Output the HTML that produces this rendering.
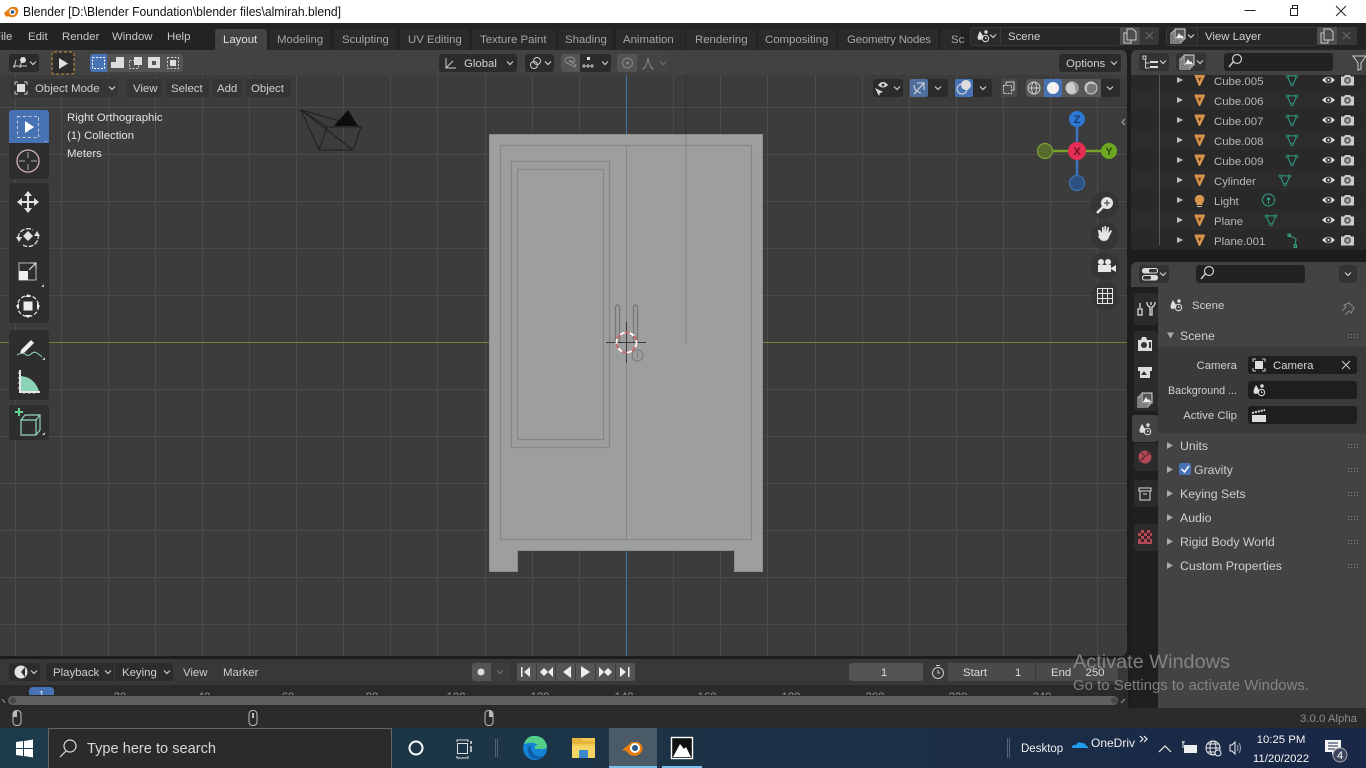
<!DOCTYPE html>
<html><head><meta charset="utf-8"><style>
html,body{margin:0;padding:0;background:#1d1d1d;width:1366px;height:768px;overflow:hidden}
svg{display:block}
text{font-family:"Liberation Sans","DejaVu Sans",sans-serif;font-size:11.4px;fill:#c4c4c4}
.t{fill:#a6a6a6}
.w{fill:#e6e6e6}
.ic{fill:none;stroke:#d0d0d0;stroke-width:1.2}
.f{fill:#d0d0d0}
</style></head><body>
<svg width="1366" height="768" viewBox="0 0 1366 768" xmlns="http://www.w3.org/2000/svg">
<defs>
<linearGradient id="tb" x1="0" x2="1" y1="0" y2="0"><stop offset="0" stop-color="#1c3b4b"/><stop offset=".5" stop-color="#1c3346"/><stop offset="1" stop-color="#1a2747"/></linearGradient>
<g id="tri"><path d="M-4-4.500H4.500L0 5z" fill="#c9843d" stroke="#d9954e" stroke-width="2" stroke-linejoin="round"/><path d="M-1.500-2H1.500L0 1.500z" fill="#5b3a1a"/></g>
<g id="eye"><path d="M-6.500 0Q0-6.500 6.500 0Q0 6.500-6.500 0z" fill="#ddd"/><circle r="2.800" fill="#333"/><circle r="1.100" fill="#ddd"/></g>
<g id="cam"><path d="M-6.500-3.500h3l1-1.500h5l1 1.500h3v9h-13z" fill="#ccc"/><circle cy=".4" r="3.400" fill="#555"/><circle cy=".4" r="1.800" fill="#aaa"/></g>
<g id="mesh"><g transform="scale(.82)"><path d="M-6-5H6L1 6H-1z" fill="none" stroke="#2fa588" stroke-width="1.200"/><rect x="-7" y="-6" width="2.500" height="2.500" fill="#223" stroke="#2fa588" stroke-width=".9"/><rect x="4.500" y="-6" width="2.500" height="2.500" fill="#223" stroke="#2fa588" stroke-width=".9"/><rect x="-1.200" y="4.500" width="2.500" height="2.500" fill="#223" stroke="#2fa588" stroke-width=".9"/></g></g>
<g id="grip" fill="#8a8a8a"><rect x="0" y="0" width="1" height="1"/><rect x="3" y="0" width="1" height="1"/><rect x="6" y="0" width="1" height="1"/><rect x="9" y="0" width="1" height="1"/><rect x="0" y="3" width="1" height="1"/><rect x="3" y="3" width="1" height="1"/><rect x="6" y="3" width="1" height="1"/><rect x="9" y="3" width="1" height="1"/></g>
<g id="chev"><path d="M-3-1.500L0 1.500L3-1.500" fill="none" stroke="#ccc" stroke-width="1.200"/></g>
<g id="sceneic"><path d="M-5 3.500Q-6.500 1-3-5Q-.5-1 .5 1Q-1 5-5 3.500z" fill="#ddd"/><circle cx="3" cy="-4" r="1.700" fill="#ddd"/><circle cx="2.500" cy="2.500" r="3.200" fill="none" stroke="#ddd"/><path d="M2.500 1v1.500h1.500" stroke="#ddd" fill="none" stroke-width=".8"/></g>
<g id="vl"><rect x="-7" y="-3" width="10" height="10" fill="none" stroke="#ccc"/><rect x="-5" y="-5" width="10" height="10" fill="#333" stroke="#ccc"/><rect x="-3" y="-7" width="10" height="10" fill="#555" stroke="#ddd"/><path d="M-2 2L1-3L3 0L4-1L6 2z" fill="#eee"/></g>
<g id="copy"><path d="M-6-3h3v-4h6l3 3v8h-5v3h-7z" fill="none" stroke="#ccc" stroke-width="1"/><path d="M-3-3v7h4" fill="none" stroke="#ccc"/></g>
<g id="props"><rect x="-8" y="-6" width="16" height="5.500" rx="2.500" fill="#ddd"/><rect x="-8" y="1" width="16" height="5.500" rx="2.500" fill="#ddd"/><rect x="-1" y="-5" width="8" height="3.500" rx="1.700" fill="#333"/><rect x="-7" y="2" width="8" height="3.500" rx="1.700" fill="#333"/></g>
<g id="mag"><circle cx="2" cy="-2" r="4.500" fill="none" stroke="#ccc" stroke-width="1.200"/><path d="M-1-.0L-6 6" stroke="#ccc" stroke-width="1.500"/></g>
<g id="mouse"><rect x="-4" y="-7.500" width="8" height="15" rx="3.500" fill="none" stroke="#bbb"/></g>
</defs>

<!-- base -->
<rect width="1366" height="768" fill="#1d1d1d"/>

<!-- title bar -->
<rect width="1366" height="23" fill="#fff"/>
<g transform="translate(11,12)"><path d="M-7 1L0-5H5Q9-2 6 3Q2 7-3 4L-5 5z" fill="#e87d0d"/><circle cx="1.500" cy="0" r="3.200" fill="#fff"/><circle cx="1.500" cy="0" r="1.800" fill="#265787"/></g>
<text x="23" y="16" style="fill:#111;font-size:12.500px" textLength="318" lengthAdjust="spacingAndGlyphs">Blender [D:\Blender Foundation\blender files\almirah.blend]</text>
<path d="M1244.500 10.500h11" stroke="#222"/>
<path d="M1290.500 8.500h7v-3h-5v3M1290.500 8.500v7h7v-7" fill="none" stroke="#222"/>
<path d="M1336 6l10 10M1346 6l-10 10" stroke="#222"/>

<!-- topbar -->
<rect y="23" width="1366" height="28" fill="#232323"/>
<text x="-6" y="40" style="fill:#c8c8c8">File</text>
<text x="28" y="40" style="fill:#c8c8c8">Edit</text>
<text x="62" y="40" style="fill:#c8c8c8">Render</text>
<text x="112" y="40" style="fill:#c8c8c8">Window</text>
<text x="167" y="40" style="fill:#c8c8c8">Help</text>

<rect x="270" y="29" width="60" height="22" rx="3" fill="#2a2a2a"/>
<rect x="334" y="29" width="62" height="22" rx="3" fill="#2a2a2a"/>
<rect x="400" y="29" width="69" height="22" rx="3" fill="#2a2a2a"/>
<rect x="472" y="29" width="84" height="22" rx="3" fill="#2a2a2a"/>
<rect x="558" y="29" width="54" height="22" rx="3" fill="#2a2a2a"/>
<rect x="616" y="29" width="69" height="22" rx="3" fill="#2a2a2a"/>
<rect x="686" y="29" width="70" height="22" rx="3" fill="#2a2a2a"/>
<rect x="758" y="29" width="78" height="22" rx="3" fill="#2a2a2a"/>
<rect x="838" y="29" width="100" height="22" rx="3" fill="#2a2a2a"/>
<rect x="941" y="29" width="20" height="22" rx="3" fill="#2a2a2a"/>
<rect x="215" y="29" width="52" height="22" rx="3" fill="#434343"/>
<text x="223" y="43" style="fill:#e0e0e0">Layout</text>
<text x="277" y="43" class="t">Modeling</text>
<text x="342" y="43" class="t">Sculpting</text>
<text x="408" y="43" class="t">UV Editing</text>
<text x="480" y="43" class="t">Texture Paint</text>
<text x="565" y="43" class="t">Shading</text>
<text x="623" y="43" class="t">Animation</text>
<text x="695" y="43" class="t">Rendering</text>
<text x="765" y="43" class="t">Compositing</text>
<text x="847" y="43" class="t" textLength="84">Geometry Nodes</text>
<text x="951" y="43" class="t">Sc</text>

<!-- scene selector -->
<rect x="970.500" y="27.500" width="150" height="18" rx="3" fill="#2a2a2a" stroke="#383838"/>
<rect x="1000" y="28" width="120" height="17" fill="#282828"/>
<path d="M1000.500 28v17" stroke="#3a3a3a"/>
<rect x="1120" y="27" width="20" height="18" fill="#4d4d4d"/>
<rect x="1140" y="27" width="19" height="18" rx="2" fill="#383838"/>
<use href="#sceneic" transform="translate(983,36)"/><use href="#chev" transform="translate(993,36)"/>
<text x="1008" y="40" style="fill:#d0d0d0">Scene</text>
<use href="#copy" transform="translate(1130,36)"/>
<path d="M1146 32l7 7M1153 32l-7 7" stroke="#6a6a6a"/>
<rect x="1166.500" y="27.500" width="151" height="18" rx="3" fill="#2a2a2a" stroke="#383838"/>
<rect x="1197" y="28" width="120" height="17" fill="#282828"/>
<path d="M1197.500 28v17" stroke="#3a3a3a"/>
<rect x="1317" y="27" width="20" height="18" fill="#4d4d4d"/>
<rect x="1337" y="27" width="20" height="18" rx="2" fill="#383838"/>
<use href="#vl" transform="translate(1178,36)"/><use href="#chev" transform="translate(1191,36)"/>
<text x="1205" y="40" style="fill:#d0d0d0">View Layer</text>
<use href="#copy" transform="translate(1327,36)"/>
<path d="M1343 32l7 7M1350 32l-7 7" stroke="#6a6a6a"/>

<!-- viewport -->
<path d="M0 50H1121a6 6 0 0 1 6 6V650a6 6 0 0 1-6 6H0z" fill="#3c3c3c"/>
<g stroke="#4b4b4b" stroke-width="1">
<path d="M15.500 75V656M61.500 75V656M108.500 75V656M155.500 75V656M202.500 75V656M249.500 75V656M296.500 75V656M343.500 75V656M390.500 75V656M437.500 75V656M485.500 75V656M532.500 75V656M579.500 75V656M673.500 75V656M720.500 75V656M767.500 75V656M815.500 75V656M862.500 75V656M909.500 75V656M956.500 75V656M1003.500 75V656M1050.500 75V656M1097.500 75V656"/>
<path d="M0 107.500H1127M0 154.500H1127M0 201.500H1127M0 248.500H1127M0 295.500H1127M0 389.500H1127M0 436.500H1127M0 483.500H1127M0 530.500H1127M0 577.500H1127M0 624.500H1127"/>
</g>
<path d="M0 342.500H1127" stroke="#6b8a32" stroke-width="1"/>
<path d="M626.500 75V656" stroke="#3f72a8" stroke-width="1"/>

<!-- header of viewport -->
<path d="M0 50H1121a6 6 0 0 1 6 6V75H0z" fill="#424242"/>

<!-- almirah -->
<path d="M489.500 134.500H762.500V571.500H734.500V550.500H517.500V571.500H489.500z" fill="#9d9f9f" stroke="#8c8e8e"/>
<g fill="none" stroke="#858787" stroke-width="1">
<rect x="500.500" y="145.500" width="251" height="394" stroke-width="1.200"/>
<rect x="511.500" y="161.500" width="98" height="286" stroke-width="1.200"/>
<rect x="517.500" y="169.500" width="86" height="270" stroke-width="1.200"/>
<path d="M626.500 145V540"/>
<path d="M615.500 342V308q0-3 2-3t2 3V342M633.500 342V308q0-3 2-3t2 3V342" stroke="#747676" stroke-width="1.200"/>
</g>
<path d="M686 75V134" stroke="#2e2e2e" stroke-width=".8"/>
<path d="M686 134V344" stroke="#7a7c7c" stroke-width=".8"/>
<path d="M606 342.500H646M626.500 322V363" stroke="#3c3c3c" stroke-width="1"/>
<circle cx="626.500" cy="342.500" r="10" fill="none" stroke="#c66" stroke-width="1.800"/>
<circle cx="626.500" cy="342.500" r="10" fill="none" stroke="#fff" stroke-width="1.800" stroke-dasharray="5 5"/>
<circle cx="637.500" cy="355.500" r="5.500" fill="none" stroke="#7d7f7f" stroke-width="1.200"/>
<path d="M637.500 352v6" stroke="#7d7f7f"/>

<!-- camera wire -->
<g fill="none" stroke="#1e1e1e" stroke-width="1">
<path d="M301 110L361 127L353 150H319z"/>
<path d="M301 110L327 127H361M327 127L319 150M301 110L353 150"/>
</g>
<path d="M334 126L348 110L358 126z" fill="#0d0d0d"/>

<!-- viewport text -->
<text x="67" y="121" style="fill:#e4e4e4">Right Orthographic</text>
<text x="67" y="139" style="fill:#e4e4e4">(1) Collection</text>
<text x="67" y="157" style="fill:#e4e4e4">Meters</text>

<!-- header row 1 -->
<rect x="9" y="54" width="30" height="18" rx="3" fill="#2b2b2b"/>
<g stroke="#ccc" fill="none"><path d="M13 66h14M16 60l-2 8M22 60l-2 8"/></g><circle cx="23" cy="60" r="3" fill="#ddd"/><use href="#chev" transform="translate(33,63)"/>
<rect x="52" y="52" width="22" height="22" rx="2" fill="#2d2d2d" stroke="#c8963c" stroke-dasharray="3 2"/>
<path d="M59 58V69L68 63.500z" fill="#e0e0e0"/>
<rect x="90" y="54" width="93" height="18" rx="3" fill="#545454"/>
<path d="M93 54h14v18h-14a3 3 0 0 1-3-3v-12a3 3 0 0 1 3-3z" fill="#4772b3"/>
<rect x="92.500" y="57.500" width="12" height="11" fill="none" stroke="#fff" stroke-dasharray="2 1.500"/>
<path d="M111 68V62h5v-5h8v11z" fill="#ddd"/>
<rect x="129.500" y="60.500" width="9" height="8" fill="none" stroke="#ccc" stroke-dasharray="2 1.500"/><rect x="134" y="57" width="8" height="8" fill="#ddd"/>
<path d="M148 57h12v11h-12zM152 61v4h4v-4z" fill="#ddd" fill-rule="evenodd"/>
<rect x="167.500" y="57.500" width="11" height="11" fill="none" stroke="#ccc" stroke-dasharray="2 1.500"/><rect x="170" y="60" width="6" height="6" fill="#ddd"/>

<rect x="439" y="54" width="78" height="18" rx="3" fill="#2b2b2b"/>
<path d="M446 58v10h10M446 68l7-7" fill="none" stroke="#ccc"/>
<text x="464" y="67" style="fill:#d0d0d0">Global</text><use href="#chev" transform="translate(510,63)"/>
<rect x="525" y="54" width="29" height="18" rx="3" fill="#2b2b2b"/>
<circle cx="534" cy="65" r="3.500" fill="none" stroke="#ccc"/><circle cx="537" cy="61" r="3.500" fill="none" stroke="#ccc"/><use href="#chev" transform="translate(548,63)"/>
<rect x="561" y="54" width="50" height="18" rx="3" fill="#2b2b2b"/>
<path d="M564 54h16v18h-16a3 3 0 0 1-3-3v-12a3 3 0 0 1 3-3z" fill="#545454"/>
<path d="M575 67L565 62Q565 57 570 57Q574 57 575 61L572 62Q570 60 569 61L576 65z" fill="none" stroke="#8f8f8f"/>
<path d="M582 66h12M584 64v4M588 64v4M592 64v4" stroke="#ccc" fill="none"/><rect x="587" y="57" width="3" height="3" fill="#ddd"/><use href="#chev" transform="translate(605,63)"/>
<rect x="617" y="54" width="51" height="18" rx="3" fill="#444"/>
<path d="M620 54h17v18h-17a3 3 0 0 1-3-3v-12a3 3 0 0 1 3-3z" fill="#545454"/>
<circle cx="627.500" cy="63" r="5" fill="none" stroke="#888"/><circle cx="627.500" cy="63" r="1.500" fill="#888"/>
<path d="M642 69Q646 69 648 58Q650 69 654 69" fill="none" stroke="#8a8a8a"/><use href="#chev" transform="translate(663,63)" opacity=".3"/>
<rect x="1059" y="54" width="62" height="18" rx="3" fill="#2b2b2b"/>
<text x="1066" y="67" style="fill:#d0d0d0">Options</text><use href="#chev" transform="translate(1114,63)"/>

<!-- header row 2 -->
<rect x="10" y="79" width="108" height="18" rx="3" fill="#353535"/>
<rect x="17" y="84" width="8" height="8" fill="#ddd"/><path d="M15 85v-3h3M24 82h3v3M27 91v3h-3M18 94h-3v-3" fill="none" stroke="#ccc"/>
<text x="35" y="92" style="fill:#cfcfcf">Object Mode</text><use href="#chev" transform="translate(112,88)"/>
<rect x="126" y="79" width="36" height="18" rx="3" fill="#353535"/>
<rect x="166" y="79" width="43" height="18" rx="3" fill="#353535"/>
<rect x="212" y="79" width="30" height="18" rx="3" fill="#353535"/>
<rect x="246" y="79" width="45" height="18" rx="3" fill="#353535"/>
<text x="133" y="92" style="fill:#cfcfcf">View</text>
<text x="171" y="92" style="fill:#cfcfcf">Select</text>
<text x="217" y="92" style="fill:#cfcfcf">Add</text>
<text x="251" y="92" style="fill:#cfcfcf">Object</text>

<!-- right header icons -->
<rect x="873" y="79" width="30" height="18" rx="3" fill="#2b2b2b"/>
<path d="M875 88l4 8 1-3 3-1z" fill="#ddd"/><path d="M878 85Q883 79 888 85Q883 90 878 85z" fill="#ddd"/><circle cx="883" cy="85" r="1.500" fill="#333"/><use href="#chev" transform="translate(897,88)"/>
<rect x="910" y="79" width="38" height="18" rx="3" fill="#2b2b2b"/>
<rect x="910" y="79" width="18" height="18" rx="2" fill="#4f6f9f"/>
<path d="M914 94L924 83M917 83h7v7M914 85Q914 91 921 93" fill="none" stroke="#ddd"/><use href="#chev" transform="translate(938,88)"/>
<rect x="955" y="79" width="37" height="18" rx="3" fill="#2b2b2b"/>
<rect x="955" y="79" width="18" height="18" rx="2" fill="#4772b3"/>
<circle cx="962" cy="89" r="5" fill="none" stroke="#ddd"/><circle cx="966" cy="85" r="5" fill="#ddd"/><use href="#chev" transform="translate(983,88)"/>
<rect x="1001" y="79" width="16" height="18" rx="2" fill="#4a4a4a"/>
<rect x="1003.500" y="85.500" width="8" height="8" fill="none" stroke="#ccc" stroke-dasharray="2 1"/><path d="M1006 85v-3h8v8h-3" fill="none" stroke="#ccc"/>
<rect x="1026" y="79" width="94" height="18" rx="3" fill="#2b2b2b"/>
<path d="M1029 79h72v18h-72a3 3 0 0 1-3-3v-12a3 3 0 0 1 3-3z" fill="#575757"/>
<rect x="1044" y="79" width="18" height="18" fill="#4772b3"/>
<circle cx="1034" cy="88" r="6" fill="none" stroke="#ccc"/><ellipse cx="1034" cy="88" rx="2.500" ry="6" fill="none" stroke="#ccc"/><path d="M1028 88h12" stroke="#ccc"/>
<circle cx="1053" cy="88" r="6" fill="#f3f3f3"/>
<circle cx="1072" cy="88" r="6" fill="#888" stroke="#bbb"/><path d="M1072 82a6 6 0 0 0 0 12l4-2-1-7z" fill="#ccc"/>
<circle cx="1091" cy="88" r="6" fill="#777" stroke="#ccc"/><path d="M1087 91a5 5 0 0 1 7-7" fill="none" stroke="#ddd"/>
<use href="#chev" transform="translate(1110,88)"/>
<path d="M1125 119l-3 3 3 3" fill="none" stroke="#aaa"/>

<!-- gizmo -->
<path d="M1077 119V183" stroke="#3a74c0" stroke-width="2.500"/>
<path d="M1045 151H1109" stroke="#7ba22a" stroke-width="2.500"/>
<circle cx="1077" cy="119" r="8" fill="#2e78d2"/><text x="1077" y="123" text-anchor="middle" style="fill:#123a70;font-weight:bold;font-size:11px">Z</text>
<circle cx="1077" cy="183" r="7.500" fill="#2d527f" stroke="#3b70b3" stroke-width="1.200"/>
<circle cx="1045" cy="151" r="7.500" fill="#566b2d" stroke="#7fa034" stroke-width="1.200"/>
<circle cx="1077" cy="151" r="9" fill="#e62e54"/><text x="1077" y="155" text-anchor="middle" style="fill:#6d0f24;font-weight:bold;font-size:11px">X</text>
<circle cx="1109" cy="151" r="8" fill="#6ea820"/><text x="1109" y="155" text-anchor="middle" style="fill:#2e4a10;font-weight:bold;font-size:11px">Y</text>

<!-- nav icons -->
<circle cx="1105" cy="205" r="14" fill="#333" fill-opacity=".8"/>
<circle cx="1107" cy="203" r="6" fill="#e5e5e5"/><path d="M1103 207l-6 6" stroke="#e5e5e5" stroke-width="2.500"/><path d="M1104 203h6M1107 200v6" stroke="#333"/>
<circle cx="1105" cy="236" r="14" fill="#333" fill-opacity=".8"/>
<path d="M1099 236l-1-6 2 0 2 3 0-6h1.500l.5 5 .5-6h1.500l.5 6 1-5h1.500l-.5 6 2-3 1.500 1-3 6q-1 4-5 4q-4 0-6-5z" fill="#e5e5e5"/>
<circle cx="1105" cy="266" r="14" fill="#333" fill-opacity=".8"/>
<circle cx="1101" cy="262" r="3" fill="#e5e5e5"/><circle cx="1108" cy="262" r="3" fill="#e5e5e5"/><rect x="1098" y="265" width="13" height="7" fill="#e5e5e5"/><path d="M1111 268l5-3v7l-5-3z" fill="#e5e5e5"/>
<circle cx="1105" cy="296" r="14" fill="#333" fill-opacity=".8"/>
<path d="M1097.500 288.500h15v15h-15zM1102.500 288.500v15M1107.500 288.500v15M1097.500 293.500h15M1097.500 298.500h15" fill="none" stroke="#e5e5e5"/>

<!-- toolbar -->
<rect x="9" y="110" width="40" height="69" rx="3" fill="#2e2e2e"/>
<path d="M12 110h34a3 3 0 0 1 3 3v30h-40v-30a3 3 0 0 1 3-3z" fill="#4772b3"/>
<rect x="17.500" y="116.500" width="21" height="21" fill="none" stroke="#c9c9c9" stroke-dasharray="3 2.500"/>
<path d="M25 121V133L34 127z" fill="#fff"/><path d="M47 141l-3 1h3z" fill="#ccc"/>
<circle cx="28" cy="161" r="11" fill="none" stroke="#d6b4b4" stroke-width="1.300"/>
<path d="M28 152v6M28 164v6M19 161h6M31 161h6" stroke="#aaa"/>
<rect x="9" y="183" width="40" height="140" rx="3" fill="#2e2e2e"/>
<g fill="#e2e2e2"><path d="M28 191l-4 5h8zM28 213l-4-5h8zM17 202l5-4v8zM39 202l-5-4v8z"/><rect x="27" y="195" width="2" height="14"/><rect x="21" y="201" width="14" height="2"/></g>
<path d="M28 232l5 5-5 5-5-5z" fill="#e2e2e2" transform="translate(0,-1)"/>
<path d="M18 238a10 10 0 0 1 15-8M38 234a10 10 0 0 1-15 11" fill="none" stroke="#e2e2e2" stroke-width="1.300" stroke-dasharray="5 1.500"/>
<path d="M16 237l6 0-3 5zM40 236l-6 0 3-5z" fill="#e2e2e2"/>
<rect x="19" y="263" width="17" height="17" fill="none" stroke="#bbb"/><rect x="19" y="271" width="9" height="9" fill="#eee"/><path d="M29 270l7-7M31 263h5v5" stroke="#eee" fill="none"/>
<path d="M44 287v-3l-3 3z" fill="#bbb"/>
<circle cx="28" cy="306" r="10.500" fill="none" stroke="#e2e2e2" stroke-width="1.300" stroke-dasharray="4 2"/><rect x="23.500" y="301.500" width="9" height="9" fill="#eee"/>
<path d="M28 294l3 3h-6zM28 318l3-3h-6zM16 306l3-3v6zM40 306l-3-3v6z" fill="#eee"/>
<rect x="9" y="330" width="40" height="70" rx="3" fill="#2e2e2e"/>
<path d="M31 340l3 3-10 10-4 1 1-4z" fill="#eee"/><path d="M17 355q5-3 8-1q3 3 6 0q3-3 6-1q3 2 5 4" fill="none" stroke="#8ed3ba"/>
<path d="M45 360v-3l-3 3z" fill="#bbb"/>
<path d="M20 370V392H40" fill="none" stroke="#e6e6e6" stroke-width="2"/><path d="M21 376q13 1 18 15H21z" fill="#8bd4b6"/>
<path d="M20 373h-2M20 378h-2M20 383h-2M20 388h-2M24 392v2M29 392v2M34 392v2" stroke="#e6e6e6"/>
<rect x="9" y="405" width="40" height="35" rx="3" fill="#2e2e2e"/>
<path d="M21 420h15v15h-15zM21 420l4-5h15l-4 5M40 415v15l-4 5" fill="none" stroke="#93d8bb" stroke-width="1.200"/>
<path d="M19 408v8M15 412h8" stroke="#68d08f" stroke-width="2"/>
<path d="M45 435v-3l-3 3z" fill="#bbb"/>

<!-- timeline -->
<rect x="0" y="656" width="1128" height="3" fill="#1d1d1d"/>
<path d="M0 659H1122a6 6 0 0 1 6 6V708H0z" fill="#2a2a2a"/>
<path d="M0 659H1122a6 6 0 0 1 6 6V685H0z" fill="#383838"/>
<rect x="9" y="663" width="31" height="18" rx="3" fill="#2c2c2c"/>
<circle cx="21" cy="672" r="6.500" fill="#e2e2e2"/><path d="M25 667l-4 5 4 5z" fill="#2c2c2c"/><use href="#chev" transform="translate(34,672)"/>
<rect x="46" y="663" width="127" height="18" rx="3" fill="#2c2c2c"/>
<path d="M114.500 663v18" stroke="#3c3c3c"/>
<text x="53" y="676" style="fill:#cfcfcf">Playback</text><use href="#chev" transform="translate(108,672)"/>
<text x="122" y="676" style="fill:#cfcfcf">Keying</text><use href="#chev" transform="translate(167,672)"/>
<text x="183" y="676" style="fill:#cfcfcf">View</text>
<text x="223" y="676" style="fill:#cfcfcf">Marker</text>
<rect x="472" y="663" width="38" height="18" rx="3" fill="#3d3d3d"/>
<path d="M475 663h16v18h-16a3 3 0 0 1-3-3v-12a3 3 0 0 1 3-3z" fill="#545454"/>
<circle cx="481" cy="672" r="3.500" fill="#ddd"/><use href="#chev" transform="translate(500,672)" opacity=".35"/>
<rect x="517" y="663" width="118" height="18" rx="3" fill="#545454"/>
<path d="M536.500 663v18M555.500 663v18M575.500 663v18M595.500 663v18M615.500 663v18" stroke="#3c3c3c"/>
<g fill="#eee">
<rect x="521" y="667" width="1.500" height="10"/><path d="M530 667v10l-6-5z"/>
<path d="M540 672l4-4 4 4-4 4zM553 667v10l-5-5z"/>
<path d="M571 666v12l-8-6z"/>
<path d="M581 666v12l9-6z"/>
<path d="M599 667v10l5-5zM604 672l4-4 4 4-4 4z"/>
<path d="M620 667v10l6-5z"/><rect x="628" y="667" width="1.500" height="10"/>
</g>
<rect x="849" y="663" width="74" height="18" rx="3" fill="#545454"/>
<text x="884" y="676" text-anchor="middle" style="fill:#ddd">1</text>
<rect x="929" y="663" width="189" height="18" rx="3" fill="#4a4a4a"/>
<rect x="929" y="663" width="19" height="18" rx="2" fill="#3a3a3a"/>
<circle cx="938" cy="673" r="5.500" fill="none" stroke="#ccc"/><path d="M938 670v3h2M936 665.500h4" stroke="#ccc" fill="none"/>
<path d="M1035.500 663v18" stroke="#3c3c3c"/>
<text x="963" y="676" style="fill:#ddd">Start</text><text x="1018" y="676" text-anchor="middle" style="fill:#ddd">1</text>
<text x="1051" y="676" style="fill:#ddd">End</text><text x="1095" y="676" text-anchor="middle" style="fill:#ddd">250</text>

<!-- scrub numbers -->
<g text-anchor="middle">
<text x="120" y="700" text-anchor="middle" style="fill:#9a9a9a">20</text>
<text x="204" y="700" text-anchor="middle" style="fill:#9a9a9a">40</text>
<text x="288" y="700" text-anchor="middle" style="fill:#9a9a9a">60</text>
<text x="372" y="700" text-anchor="middle" style="fill:#9a9a9a">80</text>
<text x="456" y="700" text-anchor="middle" style="fill:#9a9a9a">100</text>
<text x="540" y="700" text-anchor="middle" style="fill:#9a9a9a">120</text>
<text x="624" y="700" text-anchor="middle" style="fill:#9a9a9a">140</text>
<text x="707" y="700" text-anchor="middle" style="fill:#9a9a9a">160</text>
<text x="791" y="700" text-anchor="middle" style="fill:#9a9a9a">180</text>
<text x="875" y="700" text-anchor="middle" style="fill:#9a9a9a">200</text>
<text x="958" y="700" text-anchor="middle" style="fill:#9a9a9a">220</text>
<text x="1042" y="700" text-anchor="middle" style="fill:#9a9a9a">240</text>
</g>
<rect x="29" y="687" width="25" height="14" rx="4" fill="#4772b3"/>
<text x="41.500" y="698" text-anchor="middle" style="fill:#dfe8f5;font-size:10px">1</text>
<rect x="0" y="695" width="1128" height="13" fill="#2a2a2a"/>
<rect x="8" y="696" width="1110" height="9" rx="4.500" fill="#5f5f5f"/>
<circle cx="13" cy="700.500" r="3" fill="#454545"/><circle cx="1114" cy="700.500" r="3" fill="#454545"/>
<path d="M1121 703l4-4M2 699l3 4" stroke="#999"/>

<!-- status bar -->
<rect x="0" y="708" width="1366" height="20" fill="#2b2b2b"/>
<use href="#mouse" transform="translate(17,718)"/><path d="M17 710.500q-4 0-4 3.500v3h4z" fill="#bbb"/>
<use href="#mouse" transform="translate(253,718)"/><rect x="252" y="713" width="2" height="5" fill="#bbb"/>
<use href="#mouse" transform="translate(489,718)"/><path d="M489 710.500q4 0 4 3.500v3h-4z" fill="#bbb"/>
<text x="1357" y="722" text-anchor="end" style="fill:#8c8c8c">3.0.0 Alpha</text>

<!-- outliner -->
<path d="M1137 50H1366V250H1131V56a6 6 0 0 1 6-6z" fill="#292929"/>
<g fill="#2c2c2c">
<rect x="1131" y="90" width="235" height="20"/><rect x="1131" y="130" width="235" height="20"/><rect x="1131" y="170" width="235" height="20"/><rect x="1131" y="210" width="235" height="20"/>
</g>
<path d="M1159.500 75V245" stroke="#5a5a5a"/>
<g fill="#bbb">
<path d="M1177 77v6l6-3z"/><path d="M1177 97v6l6-3z"/><path d="M1177 117v6l6-3z"/><path d="M1177 137v6l6-3z"/><path d="M1177 157v6l6-3z"/><path d="M1177 177v6l6-3z"/><path d="M1177 197v6l6-3z"/><path d="M1177 217v6l6-3z"/><path d="M1177 237v6l6-3z"/>
</g>
<use href="#tri" transform="translate(1199.500,80)"/><use href="#tri" transform="translate(1199.500,100)"/><use href="#tri" transform="translate(1199.500,120)"/><use href="#tri" transform="translate(1199.500,140)"/><use href="#tri" transform="translate(1199.500,160)"/><use href="#tri" transform="translate(1199.500,180)"/><use href="#tri" transform="translate(1199.500,220)"/><use href="#tri" transform="translate(1199.500,240)"/>
<path d="M1199.500 195a4.500 4.500 0 0 1 3 8v2h-6v-2a4.500 4.500 0 0 1 3-8z" fill="#d9954e"/><path d="M1197 206.500h5" stroke="#bbb"/>
<text x="1214" y="85" style="fill:#b8b8b8">Cube.005</text>
<text x="1214" y="105" style="fill:#b8b8b8">Cube.006</text>
<text x="1214" y="125" style="fill:#b8b8b8">Cube.007</text>
<text x="1214" y="145" style="fill:#b8b8b8">Cube.008</text>
<text x="1214" y="165" style="fill:#b8b8b8">Cube.009</text>
<text x="1214" y="185" style="fill:#b8b8b8">Cylinder</text>
<text x="1214" y="205" style="fill:#b8b8b8">Light</text>
<text x="1214" y="225" style="fill:#b8b8b8">Plane</text>
<text x="1214" y="245" style="fill:#b8b8b8">Plane.001</text>
<use href="#mesh" transform="translate(1292,80)"/><use href="#mesh" transform="translate(1292,100)"/><use href="#mesh" transform="translate(1292,120)"/><use href="#mesh" transform="translate(1292,140)"/><use href="#mesh" transform="translate(1292,160)"/><use href="#mesh" transform="translate(1285,180)"/><use href="#mesh" transform="translate(1271,220)"/>
<circle cx="1268.500" cy="200" r="6" fill="none" stroke="#2fa588"/><circle cx="1268.500" cy="199" r="1.500" fill="#2fa588"/><path d="M1268.500 201v3" stroke="#2fa588"/>
<path d="M1289 235l7 4 -1 7" fill="none" stroke="#2fa588"/><rect x="1288" y="234" width="2.500" height="2.500" fill="none" stroke="#2fa588"/><rect x="1294" y="245" width="2.500" height="2.500" fill="none" stroke="#2fa588"/>
<use href="#eye" transform="translate(1328.500,80)"/><use href="#eye" transform="translate(1328.500,100)"/><use href="#eye" transform="translate(1328.500,120)"/><use href="#eye" transform="translate(1328.500,140)"/><use href="#eye" transform="translate(1328.500,160)"/><use href="#eye" transform="translate(1328.500,180)"/><use href="#eye" transform="translate(1328.500,200)"/><use href="#eye" transform="translate(1328.500,220)"/><use href="#eye" transform="translate(1328.500,240)"/>
<use href="#cam" transform="translate(1347.500,80)"/><use href="#cam" transform="translate(1347.500,100)"/><use href="#cam" transform="translate(1347.500,120)"/><use href="#cam" transform="translate(1347.500,140)"/><use href="#cam" transform="translate(1347.500,160)"/><use href="#cam" transform="translate(1347.500,180)"/><use href="#cam" transform="translate(1347.500,200)"/><use href="#cam" transform="translate(1347.500,220)"/><use href="#cam" transform="translate(1347.500,240)"/>
<path d="M1137 50H1366V75H1131V56a6 6 0 0 1 6-6z" fill="#424242"/>
<rect x="1139" y="53" width="30" height="18" rx="3" fill="#333"/>
<path d="M1143 56h3v3h-3zM1145.500 59v9h4M1145.500 63h4" fill="none" stroke="#ccc"/><path d="M1150 61h8v2h-8zM1150 66h8v2h-8z" fill="#ddd"/><use href="#chev" transform="translate(1163,62)"/>
<rect x="1176" y="53" width="30" height="18" rx="3" fill="#333"/>
<use href="#vl" transform="translate(1187,62)"/><use href="#chev" transform="translate(1200,62)"/>
<rect x="1224" y="53" width="109" height="18" rx="3" fill="#222"/>
<use href="#mag" transform="translate(1235,61)"/>
<path d="M1353 56h13l-5 7v6l-3 1v-7z" fill="none" stroke="#ccc"/>

<!-- properties -->
<path d="M1137 262H1366V708H1131V268a6 6 0 0 1 6-6z" fill="#434343"/>
<rect x="1131" y="287" width="27" height="421" fill="#1f1f1f"/>
<path d="M1137 262H1366V287H1131V268a6 6 0 0 1 6-6z" fill="#424242"/>
<rect x="1139" y="265" width="30" height="18" rx="3" fill="#333"/>
<use href="#props" transform="translate(1150,274)"/><use href="#chev" transform="translate(1163,274)"/>
<rect x="1196" y="265" width="109" height="18" rx="3" fill="#222"/>
<use href="#mag" transform="translate(1207,273)"/>
<rect x="1339" y="265" width="18" height="18" rx="3" fill="#333"/>
<use href="#chev" transform="translate(1348,274)"/>

<!-- tabs -->
<rect x="1134" y="293" width="24" height="32" rx="3" fill="#2b2b2b"/>
<rect x="1134" y="331" width="24" height="80" rx="3" fill="#2b2b2b"/>
<rect x="1134" y="443" width="24" height="28" rx="3" fill="#2b2b2b"/>
<rect x="1134" y="480" width="24" height="27" rx="3" fill="#2b2b2b"/>
<rect x="1134" y="524" width="24" height="27" rx="3" fill="#2b2b2b"/>
<rect x="1132" y="415" width="26" height="27" rx="3" fill="#434343"/>
<path d="M1140 303v5M1138 309h4v6h-4zM1151 302v3M1147 302q0 4 3 5v8h2v-8q3-1 3-5" fill="none" stroke="#ddd" stroke-width="1.300"/>
<path d="M1138 340h14v11h-14zM1141 340l1-3h4l1 3" fill="#ddd"/><circle cx="1144" cy="345" r="3" fill="#333"/><rect x="1149" y="342" width="2" height="6" fill="#333"/>
<path d="M1138 367h14v4h-2v7h-10v-7h-2z" fill="#ddd"/><path d="M1141 375l3-4 3 4z" fill="#333"/>
<use href="#vl" transform="translate(1145,400)"/>
<use href="#sceneic" transform="translate(1145,429)"/>
<circle cx="1145" cy="457" r="6.500" fill="#b34a56"/><path d="M1141 453q4 1 3 4t-3 3M1147 451q2 4 4 3" fill="none" stroke="#5c2b33"/><path d="M1138 462L1152 451" stroke="#5c2b33"/>
<path d="M1139 488h12v3h-12zM1140 491v9h10v-9" fill="none" stroke="#ddd"/><path d="M1143 494h4" stroke="#ddd"/>
<rect x="1138" y="530" width="14" height="14" fill="#b34a56"/>
<g fill="#3d2429"><rect x="1138" y="530" width="3" height="3"/><rect x="1144" y="530" width="3" height="3"/><rect x="1150" y="530" width="2" height="3"/><rect x="1141" y="533" width="3" height="3"/><rect x="1147" y="533" width="3" height="3"/><rect x="1138" y="536" width="3" height="3"/><rect x="1144" y="536" width="3" height="3"/><rect x="1150" y="536" width="2" height="3"/><rect x="1141" y="539" width="3" height="3"/><rect x="1147" y="539" width="3" height="3"/></g>

<use href="#sceneic" transform="translate(1176,305)"/>
<text x="1192" y="309" style="fill:#d0d0d0">Scene</text>
<path d="M1342 311l4-4-2-2 5-2 5 5-3 5-2-2-4 4" fill="none" stroke="#8a8a8a"/>
<path d="M1167 332.500h7l-3.500 6z" fill="#aaa"/>
<text x="1180" y="340" style="font-size:12.300px;fill:#cfcfcf">Scene</text>
<use href="#grip" transform="translate(1348,334)"/>
<rect x="1158" y="347" width="208" height="86" fill="#3a3a3a"/>
<text x="1237" y="369" text-anchor="end" style="fill:#d0d0d0">Camera</text>
<text x="1168" y="394" style="fill:#d0d0d0" textLength="69" lengthAdjust="spacingAndGlyphs">Background ...</text>
<text x="1237" y="419" text-anchor="end" style="fill:#d0d0d0">Active Clip</text>
<rect x="1248" y="356" width="109" height="18" rx="3" fill="#1e1e1e"/>
<rect x="1248" y="381" width="109" height="18" rx="3" fill="#1e1e1e"/>
<rect x="1248" y="406" width="109" height="18" rx="3" fill="#1e1e1e"/>
<rect x="1255" y="361" width="8" height="8" fill="#ddd"/><path d="M1253 362v-3h3M1262 359h3v3M1265 368v3h-3M1256 371h-3v-3" fill="none" stroke="#ccc"/>
<text x="1273" y="369" style="fill:#d5d5d5">Camera</text>
<path d="M1342 361l8 8M1350 361l-8 8" stroke="#ccc"/>
<use href="#sceneic" transform="translate(1259,390)"/>
<path d="M1252 415h14v7h-14z" fill="#ddd"/><path d="M1252 413l13-3" stroke="#ddd" stroke-width="2" stroke-dasharray="2 1"/>

<g fill="#a9a9a9">
<path d="M1167 442v7l6-3.500z"/><path d="M1167 466v7l6-3.500z"/><path d="M1167 490v7l6-3.500z"/><path d="M1167 514v7l6-3.500z"/><path d="M1167 538v7l6-3.500z"/><path d="M1167 562v7l6-3.500z"/>
</g>
<text x="1180" y="450" style="font-size:12.300px;fill:#cfcfcf">Units</text>
<rect x="1179" y="463" width="12" height="12" rx="2" fill="#4772b3"/>
<path d="M1181.500 469l3 3 4.500-6" fill="none" stroke="#fff" stroke-width="1.500"/>
<text x="1194" y="474" style="font-size:12.300px;fill:#cfcfcf">Gravity</text>
<text x="1180" y="498" style="font-size:12.300px;fill:#cfcfcf">Keying Sets</text>
<text x="1180" y="522" style="font-size:12.300px;fill:#cfcfcf">Audio</text>
<text x="1180" y="546" style="font-size:12.300px;fill:#cfcfcf">Rigid Body World</text>
<text x="1180" y="570" style="font-size:12.300px;fill:#cfcfcf">Custom Properties</text>
<use href="#grip" transform="translate(1348,444)"/><use href="#grip" transform="translate(1348,468)"/><use href="#grip" transform="translate(1348,492)"/><use href="#grip" transform="translate(1348,516)"/><use href="#grip" transform="translate(1348,540)"/><use href="#grip" transform="translate(1348,564)"/>

<!-- activate windows -->
<text x="1073" y="668" style="font-size:19px;fill:#8f8f8f;fill-opacity:.85" textLength="157" lengthAdjust="spacingAndGlyphs">Activate Windows</text>
<text x="1073" y="690" style="font-size:14.500px;fill:#8f8f8f;fill-opacity:.85" textLength="236" lengthAdjust="spacingAndGlyphs">Go to Settings to activate Windows.</text>

<!-- taskbar -->
<rect y="728" width="1366" height="40" fill="url(#tb)"/>
<path d="M16 742l7-1v7h-7zM24 741l9-1.500V748h-9zM16 749h7v7l-7-1zM24 749h9v8.500l-9-1.500z" fill="#fff"/>
<rect x="48.500" y="728.500" width="343" height="40" fill="#2b2b2b" stroke="#666"/>
<circle cx="70" cy="746" r="6" fill="none" stroke="#ddd" stroke-width="1.200"/><path d="M66 751l-6 6" stroke="#ddd" stroke-width="1.200"/>
<text x="87" y="753" style="font-size:15px;fill:#d8d8d8" textLength="129" lengthAdjust="spacingAndGlyphs">Type here to search</text>
<circle cx="416" cy="748" r="6.500" fill="none" stroke="#fff" stroke-width="2"/>
<path d="M457 742v-2h11v2M457 756v2h11v-2" fill="none" stroke="#ddd"/><rect x="457.500" y="743.500" width="10" height="10" fill="none" stroke="#ddd"/><path d="M471 741v3M471 746v6" stroke="#ddd" stroke-width="1.500"/>
<path d="M495.500 739v18M497.500 739v18" stroke="#56646f"/>
<circle cx="535" cy="748" r="12" fill="#1583d6"/>
<path d="M524 744q3-9 12-8q9 1 11 10q0 3-4 3h-8q-1-4 3-4q-5-4-14-1z" fill="#53cf8a"/>
<path d="M528 752q2 7 8 7q4 0 8-3q-8 2-11-3t-2-8q-5 2-3 7z" fill="#0c5fa8"/>
<rect x="572" y="738" width="23" height="20" fill="#f2c94c"/><path d="M572 738h9l2 3h12v3h-23z" fill="#e5b53b"/><rect x="572" y="746" width="23" height="12" fill="#f6d565"/><rect x="579" y="750" width="9" height="8" fill="#3b8bc9"/>
<rect x="609" y="728" width="48" height="40" fill="#4a5a66"/>
<rect x="609" y="766" width="48" height="2" fill="#7cc0ee"/>
<rect x="662" y="766" width="40" height="2" fill="#7cc0ee"/>
<g transform="translate(633,748)"><path d="M-11 2L-1-6H5Q11-3 9 3Q5 10-3 7L-7 3z" fill="#e87d0d"/><circle cx="2" cy="0" r="5" fill="#fff"/><circle cx="2" cy="0" r="3" fill="#265787"/></g>
<rect x="671.500" y="737.500" width="21" height="21" fill="#111" stroke="#fff" stroke-width="1.400"/><path d="M673 757l7-13 4 5 2-2 5 10z" fill="#fff"/>
<path d="M1007.500 738v20M1009.500 738v20" stroke="#56646f"/>
<text x="1021" y="752" style="fill:#f0f0f0;font-size:11.500px">Desktop</text>
<path d="M1072 748q0-4 4-3q2-4 6-2q4 0 4 3q3 0 2 2z" fill="#1f9bf0"/>
<text x="1091" y="747" style="fill:#f0f0f0;font-size:12px">OneDriv</text><rect x="1136" y="734" width="3" height="20" fill="#1a2c47"/>
<path d="M1140 736l3 3-3 3M1144 736l3 3-3 3" fill="none" stroke="#eee" stroke-width="1.200"/>
<path d="M1159 752l6-6 6 6" fill="none" stroke="#eee" stroke-width="1.200"/>
<rect x="1184" y="745" width="13" height="8" fill="#eee"/><path d="M1183 741v7" stroke="#eee"/><path d="M1182 742h3" stroke="#eee"/>
<circle cx="1213" cy="748" r="7" fill="none" stroke="#eee"/><ellipse cx="1213" cy="748" rx="3" ry="7" fill="none" stroke="#eee"/><path d="M1206 748h14M1207 744h12M1207 752h12" stroke="#eee"/><circle cx="1218" cy="753" r="3" fill="#1b2d48" stroke="#eee"/>
<path d="M1230 745h2l3-3v12l-3-3h-2z" fill="none" stroke="#eee"/><path d="M1237 745q2 3 0 6M1239 743q3 5 0 10" fill="none" stroke="#9fa9b8"/>
<text x="1281" y="743" text-anchor="middle" style="fill:#f4f4f4">10:25 PM</text>
<text x="1281" y="762" text-anchor="middle" style="fill:#f4f4f4">11/20/2022</text>
<path d="M1325 740h16v12h-6l-3 3v-3h-7z" fill="#f4f4f4"/><path d="M1328 743h10M1328 746h10M1328 749h7" stroke="#1a2a48"/>
<circle cx="1340" cy="755" r="7" fill="#3b475e" stroke="#aaa"/>
<text x="1340" y="759" text-anchor="middle" style="fill:#fff;font-size:11px">4</text>
</svg>
</body></html>
